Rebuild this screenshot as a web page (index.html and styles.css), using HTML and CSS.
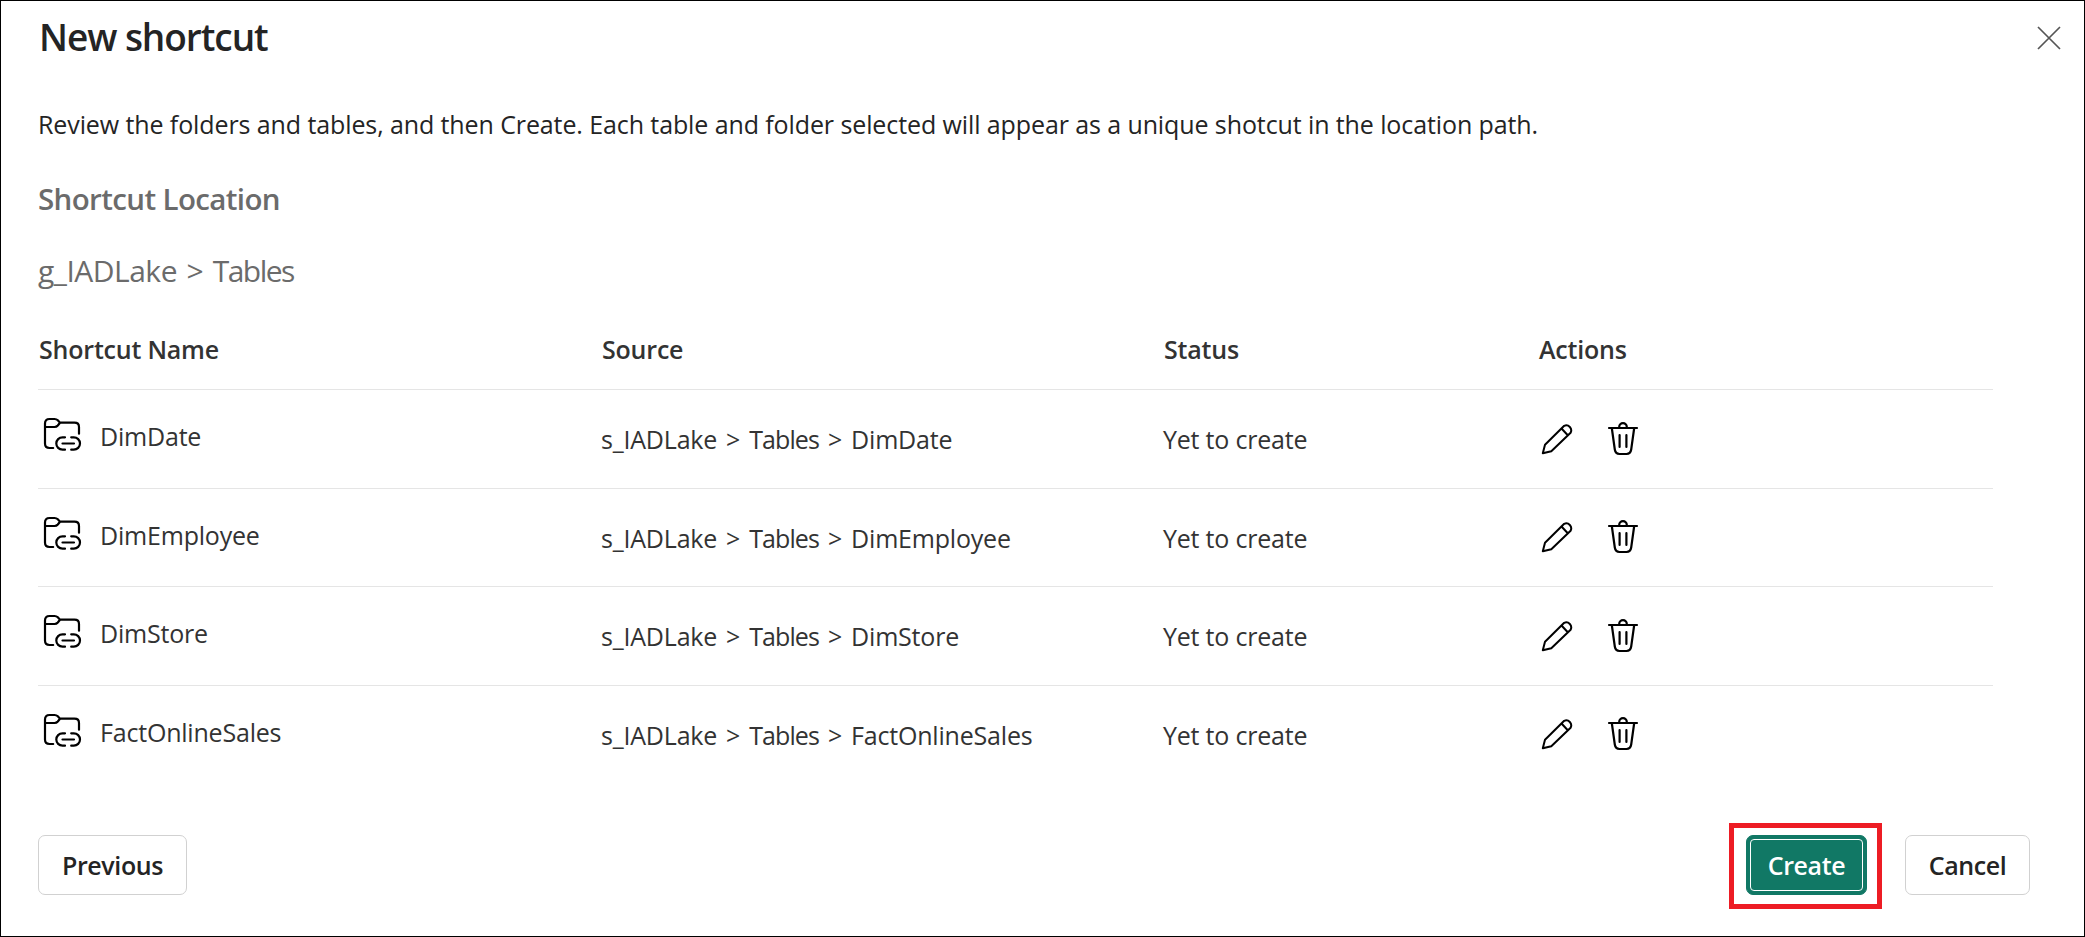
FILE: index.html
```html
<!DOCTYPE html>
<html lang="en">
<head>
<meta charset="utf-8">
<title>New shortcut</title>
<link rel="stylesheet" href="styles.css">
</head>
<body>
<svg class="sprite" aria-hidden="true">
  <symbol id="folder-link" viewBox="0 0 40 36">
    <path d="M10.200 31H6.500Q2 31 2 26.500V6.500Q2 2 6.500 2H11.500Q13.500 2 14.800 3.300L17 5.700H31.500Q36 5.700 36 10V16.700M2 10H11.500Q13.500 10 14.800 8.500L17 5.700M22 20.300H19.500A6.200 6.200 0 0 0 19.500 32.700H22M28.200 20.300H30.800A6.200 6.200 0 0 1 30.800 32.700H28.200M19.500 26.500H31"/>
  </symbol>
  <symbol id="pencil" viewBox="0 0 32 32">
    <path d="M1.800 30.200L4 21.800L23.200 2.800A5 5 0 0 1 29.600 9.700L10.300 28.300ZM20.500 5.500L26.800 12.300"/>
  </symbol>
  <symbol id="trash" viewBox="0 0 32 34">
    <path d="M2 6H30M12.200 6V5A3.800 3.800 0 0 1 19.800 5V6M4.800 6L7.800 27.500Q8.500 32 12.500 32H19.500Q23.500 32 24.200 27.500L27.200 6M12.600 13V25M19.400 13V25"/>
  </symbol>
</svg>
<main class="dialog">
  <header class="dialog-header">
    <h1 class="title">New shortcut</h1>
    <svg class="close" viewBox="0 0 24 24"><path d="M1 1L23 23M23 1L1 23"/></svg>
  </header>
  <p class="intro">Review the folders and tables, and then Create. Each table and folder selected will appear as a unique shotcut in the location path.</p>
  <h2 class="subtitle">Shortcut Location</h2>
  <p class="path">g_IADLake &gt; <span class="crumb">Tables</span></p>
  <section class="table">
    <div class="row head"><span>Shortcut Name</span><span>Source</span><span>Status</span><span>Actions</span></div>
    <div class="row"><div class="name"><svg class="folder"><use href="#folder-link"/></svg><span>DimDate</span></div><span class="source">s_IADLake &gt; <span class="crumb">Tables</span> &gt; DimDate</span><span class="status">Yet to create</span><div class="actions"><svg class="pencil"><use href="#pencil"/></svg><svg class="trash"><use href="#trash"/></svg></div></div>
    <div class="row"><div class="name"><svg class="folder"><use href="#folder-link"/></svg><span>DimEmployee</span></div><span class="source">s_IADLake &gt; <span class="crumb">Tables</span> &gt; DimEmployee</span><span class="status">Yet to create</span><div class="actions"><svg class="pencil"><use href="#pencil"/></svg><svg class="trash"><use href="#trash"/></svg></div></div>
    <div class="row"><div class="name"><svg class="folder"><use href="#folder-link"/></svg><span>DimStore</span></div><span class="source">s_IADLake &gt; <span class="crumb">Tables</span> &gt; DimStore</span><span class="status">Yet to create</span><div class="actions"><svg class="pencil"><use href="#pencil"/></svg><svg class="trash"><use href="#trash"/></svg></div></div>
    <div class="row"><div class="name"><svg class="folder"><use href="#folder-link"/></svg><span>FactOnlineSales</span></div><span class="source">s_IADLake &gt; <span class="crumb">Tables</span> &gt; FactOnlineSales</span><span class="status">Yet to create</span><div class="actions"><svg class="pencil"><use href="#pencil"/></svg><svg class="trash"><use href="#trash"/></svg></div></div>
  </section>
  <footer class="footer">
    <button class="btn previous">Previous</button>
    <div class="highlight"><button class="btn create"><span class="create-inner">Create</span></button></div>
    <button class="btn cancel">Cancel</button>
  </footer>
</main>
</body>
</html>
```
FILE: styles.css
```css
* { box-sizing: border-box; }
body { margin: 0; background: #fff; font-family: "Open Sans", "Noto Sans", sans-serif; font-size: 25px; color: #242424; }
h1, h2, p { margin: 0; white-space: nowrap; }
.sprite { position: absolute; width: 0; height: 0; }
svg { display: block; flex: none; fill: none; stroke: #000; stroke-width: 2.200; stroke-linecap: round; stroke-linejoin: round; }
.dialog { width: 2085px; height: 937px; border: 1px solid #000; padding: 11px 54px 0 37px; overflow: hidden; }
.dialog-header { display: flex; justify-content: space-between; height: 94px; margin-right: -31px; }
.title { margin-left: 1px; font-size: 37px; line-height: 50px; font-weight: 600; letter-spacing: -1.050px; }
.close { width: 24px; height: 24px; margin-top: 14px; stroke: #555; stroke-width: 1.700; stroke-linecap: butt; }
.intro { line-height: 36px; letter-spacing: -0.100px; }
.subtitle { margin-top: 37px; font-size: 29.500px; line-height: 40px; font-weight: 600; letter-spacing: -0.620px; color: #6b6b6b; }
.path { margin-top: 32px; font-size: 30px; line-height: 40px; letter-spacing: -0.500px; word-spacing: 2.200px; color: #6b6b6b; }
.path .crumb { letter-spacing: -1.500px; }
.table { margin-top: 40px; width: 1955px; color: #333; }
.row { display: grid; grid-template-columns: 563px 562px 375px 1fr; height: 98.670px; border-top: 1px solid #e5e5e5; white-space: nowrap; line-height: 36px; letter-spacing: -0.200px; }
.head { height: 58px; border: 0; font-weight: 600; }
.head span { padding-left: 1px; }
.name { display: flex; padding-top: 26px; }
.name span { margin: 2px 0 0 17px; }
.folder { width: 40px; height: 36px; margin: 1px 0 0 5px; }
.source, .status { padding-top: 31px; }
.source { word-spacing: 2.700px; }
.source .crumb { letter-spacing: -0.900px; }
.actions { display: flex; padding-top: 31.500px; }
.pencil { width: 32px; height: 32px; margin: 1px 0 0 3px; stroke-width: 2; }
.trash { width: 32px; height: 34px; margin-left: 34px; }
.footer { display: flex; align-items: center; height: 86px; margin-top: 38px; }
.btn { height: 60px; border: 1px solid #d1d1d1; border-radius: 7px; padding: 0; background: #fff; color: #242424; font: 600 25px "Open Sans", "Noto Sans", sans-serif; letter-spacing: -0.400px; }
.previous { width: 149px; }
.highlight { width: 153px; height: 86px; border: 5px solid #ed1c24; margin: 1px 0 -1px auto; padding: 7px 10px 0 12px; }
.create { display: block; width: 121px; padding: 3px; background: #117865; border-color: #117865; color: #fff; }
.create-inner { display: flex; align-items: center; justify-content: center; height: 52px; border: 1px solid #fff; border-radius: 4px; }
.cancel { width: 125px; margin-left: 23px; }
```
